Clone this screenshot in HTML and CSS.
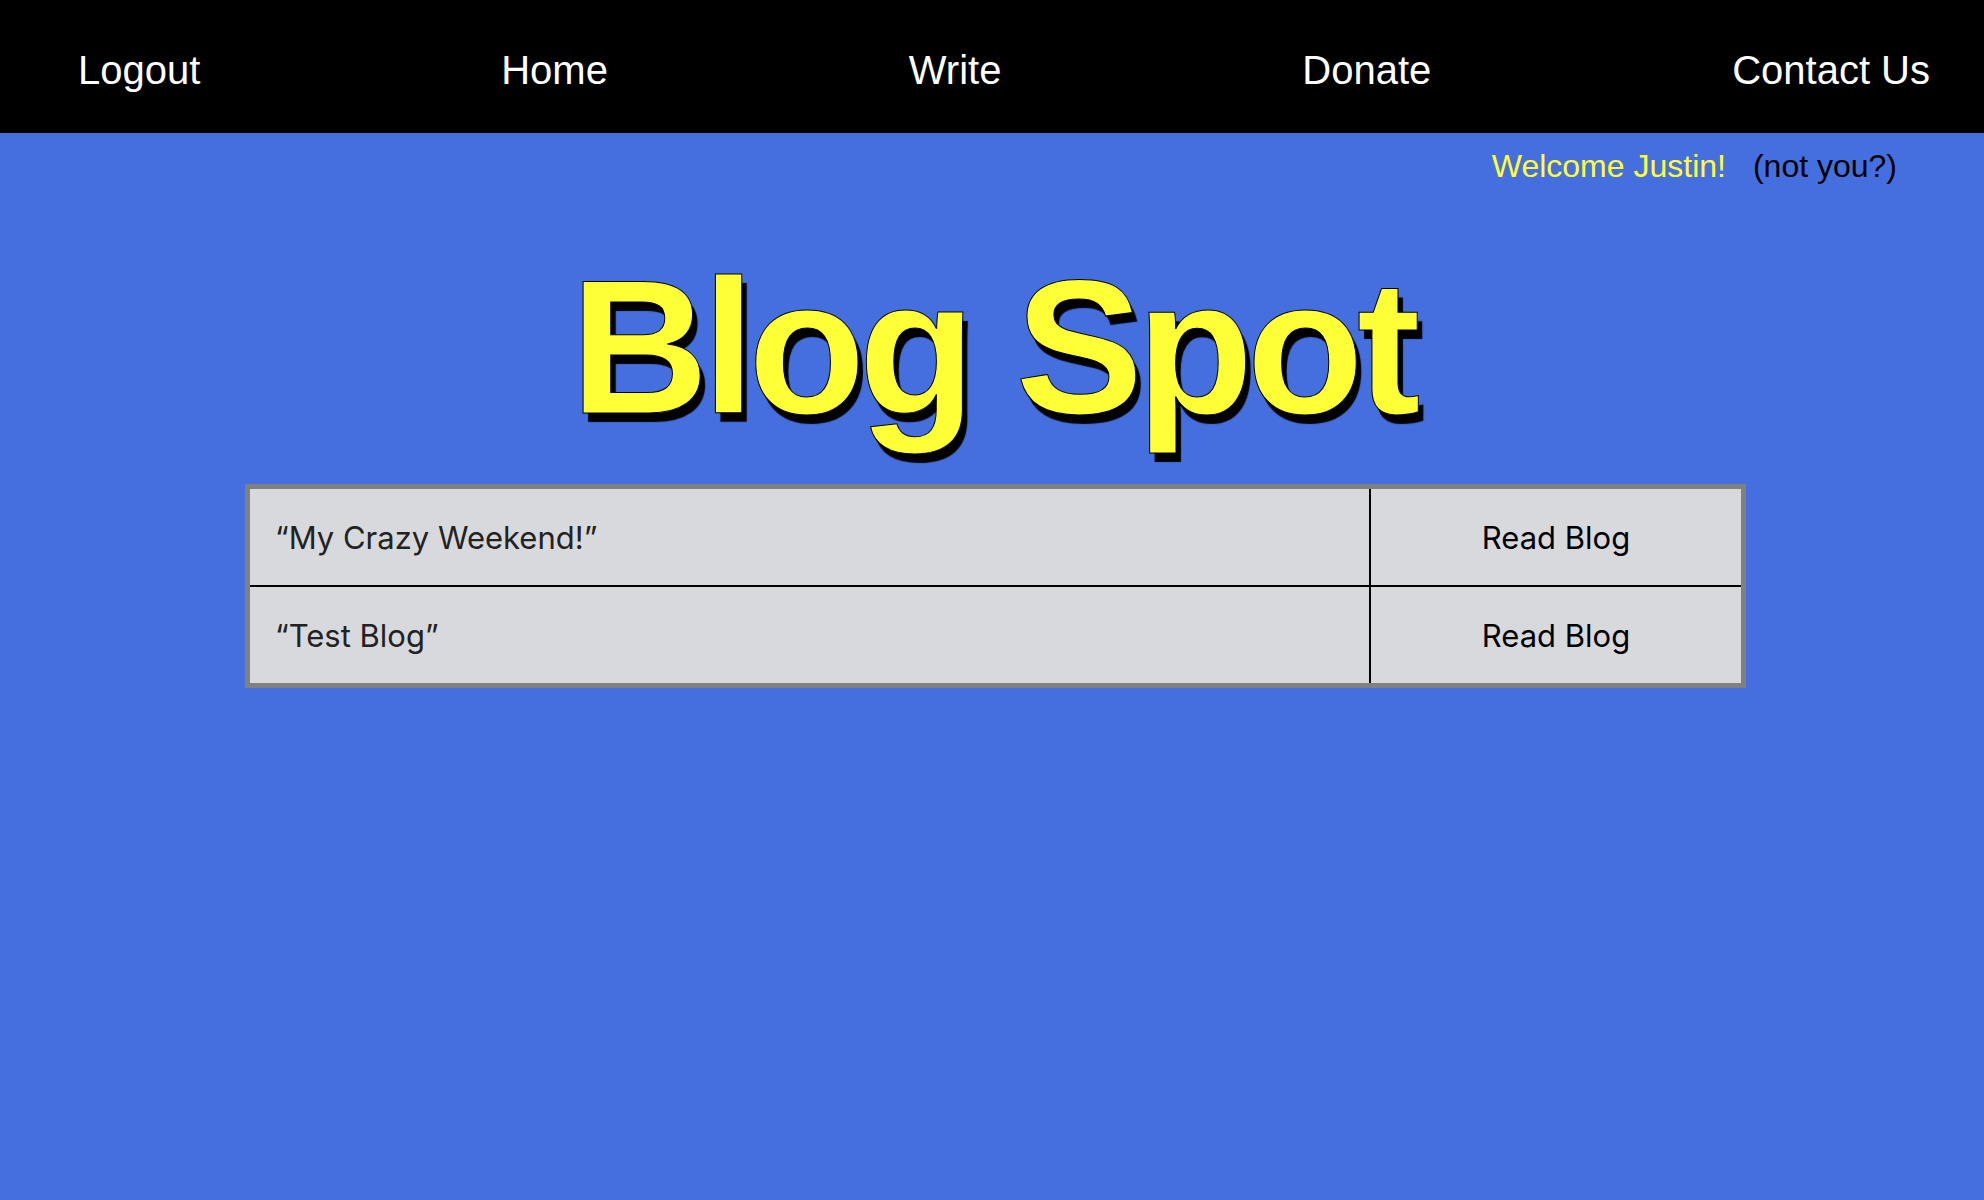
FILE: index.html
```html
<!DOCTYPE html>
<html lang="en">
<head>
<meta charset="utf-8">
<title>Blog Spot</title>
<link rel="stylesheet" href="styles.css">
</head>
<body>
<nav class="topnav">
  <a class="nav-link" href="#">Logout</a>
  <a class="nav-link" href="#">Home</a>
  <a class="nav-link" href="#">Write</a>
  <a class="nav-link" href="#">Donate</a>
  <a class="nav-link" href="#">Contact Us</a>
</nav>
<div class="welcome-row">
  <span class="welcome">Welcome Justin!</span>
  <span class="not-you">(not you?)</span>
</div>
<h1 class="title">Blog Spot</h1>
<div class="blog-table">
  <div class="blog-row">
    <div class="blog-name">“My Crazy Weekend!”</div>
    <div class="blog-action">Read Blog</div>
  </div>
  <div class="blog-row">
    <div class="blog-name">“Test Blog”</div>
    <div class="blog-action">Read Blog</div>
  </div>
</div>
</body>
</html>
```
FILE: styles.css
```css
html, body {
  margin: 0;
  padding: 0;
}
body {
  background: #456fde;
  min-height: 1200px;
  font-family: "Liberation Sans", Arial, sans-serif;
}
.topnav {
  height: 133px;
  box-sizing: border-box;
  background: #000;
  display: flex;
  align-items: center;
  justify-content: space-between;
  padding: 7px 54px 0 78px;
}
.nav-link {
  color: #fff;
  text-decoration: none;
  font-size: 40px;
}
.welcome-row {
  display: flex;
  justify-content: flex-end;
  gap: 27px;
  padding-right: 87px;
  margin-top: 15px;
  font-size: 32px;
}
.welcome {
  color: #ffff38;
}
.not-you {
  color: #000;
}
.title {
  margin: 51px 0 0 0;
  text-align: center;
  font-family: "Liberation Sans", Arial, sans-serif;
  font-weight: bold;
  font-size: 192px;
  letter-spacing: -7px;
  color: #ffff38;
  -webkit-text-stroke: 1px #000;
  text-shadow: 5px 9px 1px #000;
}
.blog-table {
  margin: 27px 0 0 245px;
  width: 1501px;
  box-sizing: border-box;
  border: 5px solid #808080;
  background: #d8d9dc;
  font-family: Inter, "Noto Sans", sans-serif;
  font-size: 31px;
}
.blog-row {
  display: grid;
  grid-template-columns: 1119px 2px 1fr;
  height: 96px;
}
.blog-row + .blog-row {
  border-top: 2px solid #000;
}
.blog-name {
  grid-column: 1;
  display: flex;
  align-items: center;
  padding-left: 25px;
  color: #222;
}
.blog-action {
  grid-column: 3;
  display: flex;
  align-items: center;
  justify-content: center;
  color: #000;
  border-left: 2px solid #000;
  margin-left: -2px;
}
```
